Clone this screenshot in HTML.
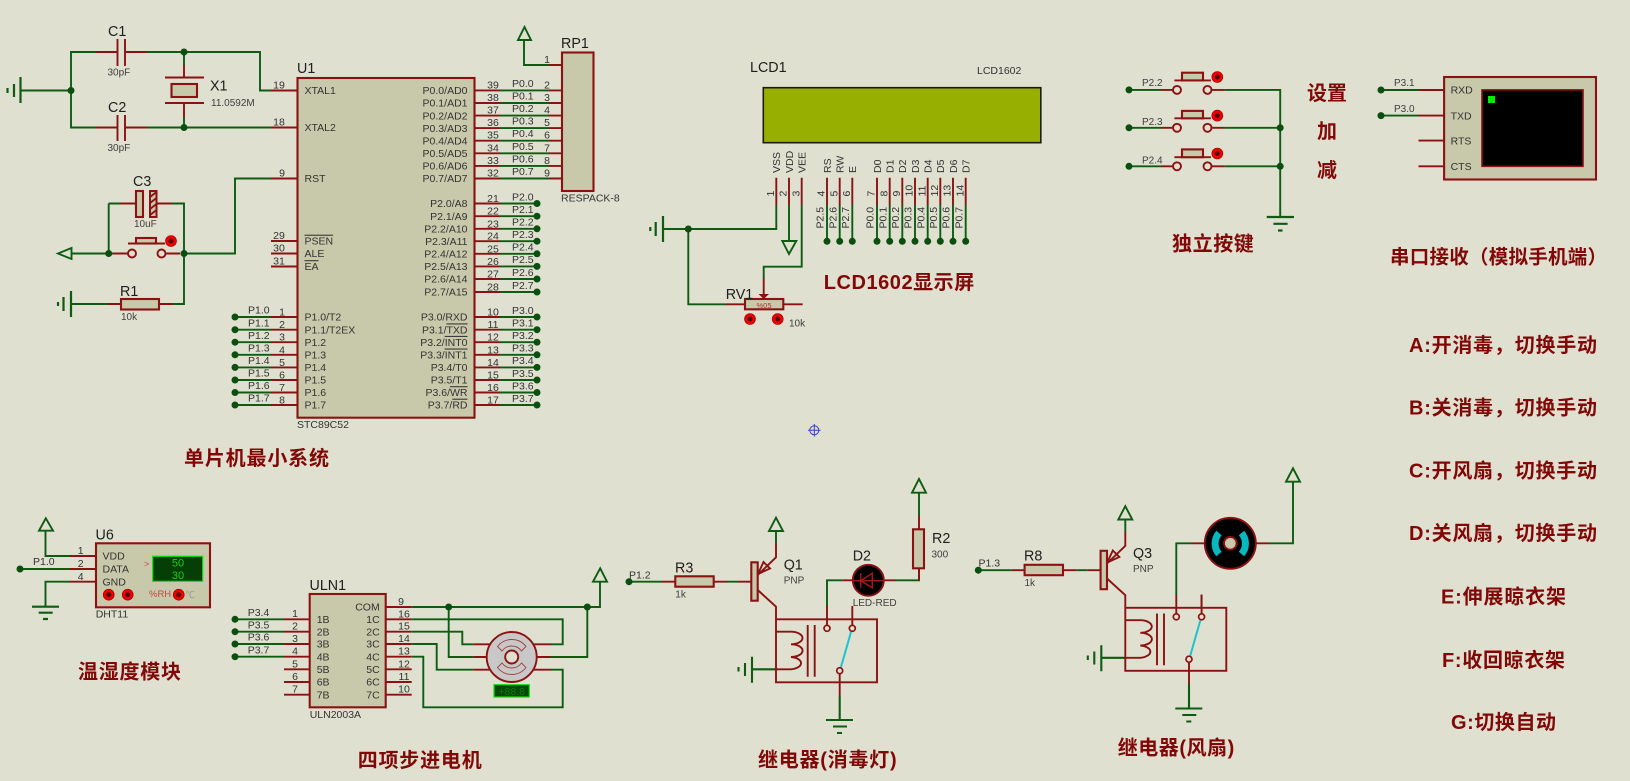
<!DOCTYPE html>
<html lang="zh">
<head>
<meta charset="utf-8">
<title>Proteus schematic</title>
<style>
html,body{margin:0;padding:0;background:#dfe0cf;width:1630px;height:781px;overflow:hidden}
svg{display:block;filter:blur(.35px)}
text{font-family:"Liberation Sans","Noto Sans CJK SC",sans-serif;fill:#333;font-size:10.5px}
.l{font-size:14.3px;fill:#1e1e1e}
.s{font-size:10px;fill:#404040}
.e{text-anchor:end}
.c{text-anchor:middle}
.t{font-size:20px;font-weight:700;fill:#820808}
.g{fill:none;stroke:#0d5c12;stroke-width:1.9}
.r{fill:none;stroke:#8b1212;stroke-width:1.9}
.b{fill:#c8c8aa;stroke:#8b1212;stroke-width:2.1}
.d{fill:#0b4f10}
.k{fill:#f00000;stroke:#a00000;stroke-width:.6}
.kk{fill:#500;}
</style>
</head>
<body>
<svg width="1630" height="781" viewBox="0 0 1630 781" xmlns="http://www.w3.org/2000/svg">
<rect width="1630" height="781" fill="#dfe0cf"/>

<!-- ===== MCU section wires ===== -->
<g class="g">
<path d="M96 52H71V127.5H96M21 90.5H71M147 52H260V90.5H271M184 52V65M147 127.5H271M184 117V127.5"/>
<path d="M271 178.5H235V253.5H184M108.7 203.5V253.5M108.7 203.5H120M172 203.5H184V304H173M71.5 253.5H113M108 304H71"/>
<path d="M20.5 77V103M14 84V97M7.5 88V93" stroke-width="2.2"/>
<path d="M71 291V317M63.5 297V311M58 302V306" stroke-width="2.2"/>
<path d="M71.5 248L58 253.5L71.5 259Z"/>
</g>
<g class="r">
<path d="M96 52H117.5M125 52H147M117.5 39V66M125 39V66" />
<path d="M96 127.5H117.5M125 127.5H147M117.5 115V141M125 115V141" />
<path d="M184 65V78M165 77.5H204M165 103H204M184 103V117" />
<path d="M271 90.5H298M271 127.5H298M271 178.5H298M271 241H298M271 253.5H298M271 266.5H298"/>
<path d="M120 203.5H136M156.5 203.5H172M113 253.5H128M165.5 253.5H180M128 243.5H165"/>
<path d="M108 304H121M159 304H173"/>
<path d="M298 86.5L302 90.5L298 94.5" stroke-width="1.3"/>
</g>
<rect class="b" x="171.5" y="84" width="25.5" height="13"/>
<rect class="b" x="136" y="191" width="7" height="26"/>
<rect x="150" y="191" width="6.5" height="26" fill="#c8c8aa" stroke="#8b1212" stroke-width="2"/>
<path d="M150 197l6.5-5M150 203l6.5-5M150 209l6.5-5M150 215l6.5-5" stroke="#8b1212" stroke-width="1.8" fill="none"/>
<rect class="b" x="136" y="238" width="20" height="5.5"/>
<circle cx="132" cy="253.5" r="4" fill="#dfe0cf" stroke="#8b1212" stroke-width="1.9"/>
<circle cx="161.5" cy="253.5" r="4" fill="#dfe0cf" stroke="#8b1212" stroke-width="1.9"/>
<circle class="k" cx="171" cy="241" r="5.5"/><circle class="kk" cx="171" cy="241" r="2.5"/>
<rect class="b" x="121" y="299" width="38" height="10.5"/>
<g class="d"><circle cx="71" cy="90.5" r="3.5"/><circle cx="184" cy="52" r="3.5"/><circle cx="184" cy="127.5" r="3.5"/><circle cx="108.7" cy="253.5" r="3.5"/><circle cx="184" cy="253.5" r="3.5"/></g>

<!-- U1 -->
<rect class="b" x="297.5" y="78" width="177" height="339.7"/>
<text class="l" x="297" y="73">U1</text>
<text class="l" x="108" y="36">C1</text>
<text class="s" x="107.5" y="75.5">30pF</text>
<text class="l" x="108" y="112">C2</text>
<text class="s" x="107.5" y="151">30pF</text>
<text class="l" x="210" y="90.5">X1</text>
<text class="s" x="211" y="106">11.0592M</text>
<text class="l" x="133" y="186">C3</text>
<text class="s" x="134" y="227">10uF</text>
<text class="l" x="120" y="296">R1</text>
<text class="s" x="121" y="320">10k</text>
<text x="297" y="428">STC89C52</text>
<text class="t" x="184" y="465" textLength="145">单片机最小系统</text>

<text class="c" x="279" y="88.5">19</text><text x="304.5" y="94.2">XTAL1</text>
<text class="c" x="279" y="125.5">18</text><text x="304.5" y="131.2">XTAL2</text>
<text class="c" x="282" y="176.5">9</text><text x="304.5" y="182.2">RST</text>
<text class="c" x="279" y="239">29</text><text x="304.5" y="244.7" text-decoration="overline">PSEN</text>
<text class="c" x="279" y="251.5">30</text><text x="304.5" y="257.2">ALE</text>
<text class="c" x="279" y="264.5">31</text><text x="304.5" y="270.2" text-decoration="overline">EA</text>

<!-- P1 pins -->
<g class="g"><path d="M235 317H271M235 329.7H271M235 342.2H271M235 354.8H271M235 367.4H271M235 380H271M235 392.5H271M235 405H271"/></g>
<g class="r"><path d="M271 317H298M271 329.7H298M271 342.2H298M271 354.8H298M271 367.4H298M271 380H298M271 392.5H298M271 405H298"/></g>
<g class="d"><circle cx="235" cy="317" r="3.5"/><circle cx="235" cy="329.7" r="3.5"/><circle cx="235" cy="342.2" r="3.5"/><circle cx="235" cy="354.8" r="3.5"/><circle cx="235" cy="367.4" r="3.5"/><circle cx="235" cy="380" r="3.5"/><circle cx="235" cy="392.5" r="3.5"/><circle cx="235" cy="405" r="3.5"/></g>
<text x="248" y="313.7">P1.0</text><text x="248" y="326.4">P1.1</text><text x="248" y="338.9">P1.2</text><text x="248" y="351.5">P1.3</text><text x="248" y="364.1">P1.4</text><text x="248" y="376.7">P1.5</text><text x="248" y="389.2">P1.6</text><text x="248" y="401.7">P1.7</text>
<text class="c" x="282" y="315.5">1</text><text class="c" x="282" y="328.2">2</text><text class="c" x="282" y="340.7">3</text><text class="c" x="282" y="353.3">4</text><text class="c" x="282" y="365.9">5</text><text class="c" x="282" y="378.5">6</text><text class="c" x="282" y="391">7</text><text class="c" x="282" y="403.5">8</text>
<text x="304.5" y="320.7">P1.0/T2</text><text x="304.5" y="333.4">P1.1/T2EX</text><text x="304.5" y="345.9">P1.2</text><text x="304.5" y="358.5">P1.3</text><text x="304.5" y="371.1">P1.4</text><text x="304.5" y="383.7">P1.5</text><text x="304.5" y="396.2">P1.6</text><text x="304.5" y="408.7">P1.7</text>

<!-- P0 pins + RP1 -->
<g class="g"><path d="M500 90.4H549M500 103H549M500 115.6H549M500 128.1H549M500 140.7H549M500 153.3H549M500 165.9H549M500 178.5H549M549 65H524V40M518 40H531L524.5 27Z"/></g>
<g class="r"><path d="M474.5 90.4H500M474.5 103H500M474.5 115.6H500M474.5 128.1H500M474.5 140.7H500M474.5 153.3H500M474.5 165.9H500M474.5 178.5H500M549 90.4H562M549 103H562M549 115.6H562M549 128.1H562M549 140.7H562M549 153.3H562M549 165.9H562M549 178.5H562M549 65H562"/></g>
<rect class="b" x="562" y="52.5" width="31.5" height="138.5"/>
<text class="l" x="561" y="48">RP1</text>
<text x="561" y="201.5">RESPACK-8</text>
<text class="c" x="547" y="63">1</text>
<g class="c"><text class="c" x="547" y="88.4">2</text><text class="c" x="547" y="101">3</text><text class="c" x="547" y="113.6">4</text><text class="c" x="547" y="126.1">5</text><text class="c" x="547" y="138.7">6</text><text class="c" x="547" y="151.3">7</text><text class="c" x="547" y="163.9">8</text><text class="c" x="547" y="176.5">9</text></g>
<text class="c" x="493" y="88.4">39</text><text class="c" x="493" y="101">38</text><text class="c" x="493" y="113.6">37</text><text class="c" x="493" y="126.1">36</text><text class="c" x="493" y="138.7">35</text><text class="c" x="493" y="151.3">34</text><text class="c" x="493" y="163.9">33</text><text class="c" x="493" y="176.5">32</text>
<text x="512" y="86.9">P0.0</text><text x="512" y="99.5">P0.1</text><text x="512" y="112.1">P0.2</text><text x="512" y="124.6">P0.3</text><text x="512" y="137.2">P0.4</text><text x="512" y="149.8">P0.5</text><text x="512" y="162.4">P0.6</text><text x="512" y="175">P0.7</text>
<text class="e" x="467.5" y="94.1">P0.0/AD0</text><text class="e" x="467.5" y="106.7">P0.1/AD1</text><text class="e" x="467.5" y="119.3">P0.2/AD2</text><text class="e" x="467.5" y="131.8">P0.3/AD3</text><text class="e" x="467.5" y="144.4">P0.4/AD4</text><text class="e" x="467.5" y="157">P0.5/AD5</text><text class="e" x="467.5" y="169.6">P0.6/AD6</text><text class="e" x="467.5" y="182.2">P0.7/AD7</text>

<!-- P2 pins -->
<g class="g"><path d="M500 203.5H537M500 216.2H537M500 228.8H537M500 241.2H537M500 253.8H537M500 266.4H537M500 279H537M500 292H537"/></g>
<g class="r"><path d="M474.5 203.5H500M474.5 216.2H500M474.5 228.8H500M474.5 241.2H500M474.5 253.8H500M474.5 266.4H500M474.5 279H500M474.5 292H500"/></g>
<g class="d"><circle cx="537" cy="203.5" r="3.5"/><circle cx="537" cy="216.2" r="3.5"/><circle cx="537" cy="228.8" r="3.5"/><circle cx="537" cy="241.2" r="3.5"/><circle cx="537" cy="253.8" r="3.5"/><circle cx="537" cy="266.4" r="3.5"/><circle cx="537" cy="279" r="3.5"/><circle cx="537" cy="292" r="3.5"/></g>
<text class="c" x="493" y="202">21</text><text class="c" x="493" y="214.7">22</text><text class="c" x="493" y="227.3">23</text><text class="c" x="493" y="239.7">24</text><text class="c" x="493" y="252.3">25</text><text class="c" x="493" y="264.9">26</text><text class="c" x="493" y="277.5">27</text><text class="c" x="493" y="290.5">28</text>
<text x="512" y="200.3">P2.0</text><text x="512" y="213">P2.1</text><text x="512" y="225.6">P2.2</text><text x="512" y="238">P2.3</text><text x="512" y="250.6">P2.4</text><text x="512" y="263.2">P2.5</text><text x="512" y="275.8">P2.6</text><text x="512" y="288.8">P2.7</text>
<text class="e" x="467.5" y="207.2">P2.0/A8</text><text class="e" x="467.5" y="219.9">P2.1/A9</text><text class="e" x="467.5" y="232.5">P2.2/A10</text><text class="e" x="467.5" y="244.9">P2.3/A11</text><text class="e" x="467.5" y="257.5">P2.4/A12</text><text class="e" x="467.5" y="270.1">P2.5/A13</text><text class="e" x="467.5" y="282.7">P2.6/A14</text><text class="e" x="467.5" y="295.7">P2.7/A15</text>

<!-- P3 pins -->
<g class="g"><path d="M500 317H537M500 329.7H537M500 342.2H537M500 354.8H537M500 367.4H537M500 380H537M500 392.5H537M500 405H537"/></g>
<g class="r"><path d="M474.5 317H500M474.5 329.7H500M474.5 342.2H500M474.5 354.8H500M474.5 367.4H500M474.5 380H500M474.5 392.5H500M474.5 405H500"/></g>
<g class="d"><circle cx="537" cy="317" r="3.5"/><circle cx="537" cy="329.7" r="3.5"/><circle cx="537" cy="342.2" r="3.5"/><circle cx="537" cy="354.8" r="3.5"/><circle cx="537" cy="367.4" r="3.5"/><circle cx="537" cy="380" r="3.5"/><circle cx="537" cy="392.5" r="3.5"/><circle cx="537" cy="405" r="3.5"/></g>
<text class="c" x="493" y="315.5">10</text><text class="c" x="493" y="328.2">11</text><text class="c" x="493" y="340.7">12</text><text class="c" x="493" y="353.3">13</text><text class="c" x="493" y="365.9">14</text><text class="c" x="493" y="378.5">15</text><text class="c" x="493" y="391">16</text><text class="c" x="493" y="403.5">17</text>
<text x="512" y="313.8">P3.0</text><text x="512" y="326.5">P3.1</text><text x="512" y="339">P3.2</text><text x="512" y="351.6">P3.3</text><text x="512" y="364.2">P3.4</text><text x="512" y="376.8">P3.5</text><text x="512" y="389.3">P3.6</text><text x="512" y="401.8">P3.7</text>
<text class="e" x="467.5" y="320.7">P3.0/RXD</text>
<text class="e" x="467.5" y="333.4">P3.1/<tspan text-decoration="overline">TXD</tspan></text>
<text class="e" x="467.5" y="345.9">P3.2/<tspan text-decoration="overline">INT0</tspan></text>
<text class="e" x="467.5" y="358.5">P3.3/<tspan text-decoration="overline">INT1</tspan></text>
<text class="e" x="467.5" y="371.1">P3.4/T0</text>
<text class="e" x="467.5" y="383.7">P3.5/T1</text>
<text class="e" x="467.5" y="396.2">P3.6/<tspan text-decoration="overline">WR</tspan></text>
<text class="e" x="467.5" y="408.7">P3.7/<tspan text-decoration="overline">RD</tspan></text>

<!-- ===== LCD ===== -->
<text class="l" x="750" y="72">LCD1</text>
<text x="977" y="74">LCD1602</text>
<rect x="763.3" y="87.7" width="277.5" height="55" fill="#97b000" stroke="#1a1a10" stroke-width="1.6"/>
<g class="r"><path d="M776.3 177.7V205M789 177.7V205M801.7 177.7V205M827 177.7V205M839.7 177.7V205M852.3 177.7V205M877 177.7V205M889.7 177.7V205M902.3 177.7V205M915 177.7V205M927.7 177.7V205M940.3 177.7V205M953 177.7V205M965.7 177.7V205"/></g>
<g class="g"><path d="M827 205V241M839.7 205V241M852.3 205V241M877 205V241M889.7 205V241M902.3 205V241M915 205V241M927.7 205V241M940.3 205V241M953 205V241M965.7 205V241"/>
<path d="M776.3 205V229H663M688.3 229V304.3H726M789 205V241M782.3 241H796.3L789 254ZM801.7 205V266.7H763.7V278"/>
<path d="M663 216V242M655.7 222V236M650.3 227V231" stroke-width="2.2"/></g>
<g class="d"><circle cx="688.3" cy="229" r="3.5"/><circle cx="827" cy="241.3" r="3.5"/><circle cx="839.7" cy="241.3" r="3.5"/><circle cx="852.3" cy="241.3" r="3.5"/><circle cx="877" cy="241.3" r="3.5"/><circle cx="889.7" cy="241.3" r="3.5"/><circle cx="902.3" cy="241.3" r="3.5"/><circle cx="915" cy="241.3" r="3.5"/><circle cx="927.7" cy="241.3" r="3.5"/><circle cx="940.3" cy="241.3" r="3.5"/><circle cx="953" cy="241.3" r="3.5"/><circle cx="965.7" cy="241.3" r="3.5"/></g>
<g>
<text transform="translate(780 173) rotate(-90)">VSS</text>
<text transform="translate(793 173) rotate(-90)">VDD</text>
<text transform="translate(805.5 173) rotate(-90)">VEE</text>
<text transform="translate(831 173) rotate(-90)">RS</text>
<text transform="translate(843.5 173) rotate(-90)">RW</text>
<text transform="translate(856 173) rotate(-90)">E</text>
<text transform="translate(881 173) rotate(-90)">D0</text>
<text transform="translate(893.5 173) rotate(-90)">D1</text>
<text transform="translate(906 173) rotate(-90)">D2</text>
<text transform="translate(919 173) rotate(-90)">D3</text>
<text transform="translate(931.5 173) rotate(-90)">D4</text>
<text transform="translate(944 173) rotate(-90)">D5</text>
<text transform="translate(957 173) rotate(-90)">D6</text>
<text transform="translate(969.5 173) rotate(-90)">D7</text>
<text transform="translate(774 196.5) rotate(-90)">1</text>
<text transform="translate(786.5 196.5) rotate(-90)">2</text>
<text transform="translate(799.5 196.5) rotate(-90)">3</text>
<text transform="translate(824.5 196.5) rotate(-90)">4</text>
<text transform="translate(837.5 196.5) rotate(-90)">5</text>
<text transform="translate(850 196.5) rotate(-90)">6</text>
<text transform="translate(874.5 196.5) rotate(-90)">7</text>
<text transform="translate(887.5 196.5) rotate(-90)">8</text>
<text transform="translate(900 196.5) rotate(-90)">9</text>
<text transform="translate(912.5 196.5) rotate(-90)">10</text>
<text transform="translate(925.5 196.5) rotate(-90)">11</text>
<text transform="translate(938 196.5) rotate(-90)">12</text>
<text transform="translate(950.5 196.5) rotate(-90)">13</text>
<text transform="translate(963.5 196.5) rotate(-90)">14</text>
<text transform="translate(823.7 228.5) rotate(-90)">P2.5</text>
<text transform="translate(836.5 228.5) rotate(-90)">P2.6</text>
<text transform="translate(849 228.5) rotate(-90)">P2.7</text>
<text transform="translate(873.5 228.5) rotate(-90)">P0.0</text>
<text transform="translate(886.5 228.5) rotate(-90)">P0.1</text>
<text transform="translate(899 228.5) rotate(-90)">P0.2</text>
<text transform="translate(911.5 228.5) rotate(-90)">P0.3</text>
<text transform="translate(924.5 228.5) rotate(-90)">P0.4</text>
<text transform="translate(937 228.5) rotate(-90)">P0.5</text>
<text transform="translate(949.5 228.5) rotate(-90)">P0.6</text>
<text transform="translate(962.5 228.5) rotate(-90)">P0.7</text>
</g>
<g class="r"><path d="M726 304.3H745M783 304.3H802.7M763.7 278V299"/></g>
<path d="M758.5 294H769L763.7 299Z" fill="#8b1212"/>
<rect class="b" x="745" y="299" width="38.3" height="10.3"/>
<text x="764" y="308" class="c" style="font-size:7.5px;fill:#c03030">%05</text>
<text class="l" x="725.7" y="299">RV1</text>
<circle class="k" cx="750" cy="319" r="5.5"/><circle class="kk" cx="750" cy="319" r="2.5"/>
<circle class="k" cx="777.7" cy="319" r="5.5"/><circle class="kk" cx="777.7" cy="319" r="2.5"/>
<text class="s" x="789" y="326.7">10k</text>
<text class="t" x="823.7" y="289" textLength="150.5">LCD1602显示屏</text>

<!-- crosshair -->
<g fill="none" stroke="#3a3ad8" stroke-width="1"><circle cx="814.3" cy="430.3" r="4.5"/><path d="M814.3 424V436.6M808 430.3H820.6"/></g>

<!-- ===== Buttons + terminal (shifted up 1px) ===== -->
<g transform="translate(0 -1)">
<g class="g">
<path d="M1129 90.9H1161M1129 128.8H1161M1129 167.3H1161M1224.4 90.9H1280.2V218M1224.4 128.8H1280.2M1224.4 167.3H1280.2"/>
<path d="M1266.7 218H1294M1273.4 224.8H1287.6M1278 231.5H1282.5" stroke-width="2.2"/>
</g>
<g class="r"><path d="M1161 90.9H1173M1211 90.9H1224.4M1161 128.8H1173M1211 128.8H1224.4M1161 167.3H1173M1211 167.3H1224.4M1174.4 81.4H1210.9M1174.4 119.3H1210.9M1174.4 158.2H1210.9"/></g>
<g fill="#dfe0cf" stroke="#8b1212" stroke-width="1.9">
<circle cx="1177" cy="90.9" r="4"/><circle cx="1207.5" cy="90.9" r="4"/><circle cx="1177" cy="128.8" r="4"/><circle cx="1207.5" cy="128.8" r="4"/><circle cx="1177" cy="167.3" r="4"/><circle cx="1207.5" cy="167.3" r="4"/></g>
<rect class="b" x="1182" y="73.7" width="21" height="7.7"/><rect class="b" x="1182" y="111.9" width="21" height="7.4"/><rect class="b" x="1182" y="150.4" width="21" height="7.8"/>
<circle class="k" cx="1217.3" cy="78" r="5.5"/><circle class="kk" cx="1217.3" cy="78" r="2.5"/>
<circle class="k" cx="1217.3" cy="116.6" r="5.5"/><circle class="kk" cx="1217.3" cy="116.6" r="2.5"/>
<circle class="k" cx="1217.3" cy="154.5" r="5.5"/><circle class="kk" cx="1217.3" cy="154.5" r="2.5"/>
<g class="d"><circle cx="1129" cy="90.9" r="3.5"/><circle cx="1129" cy="128.8" r="3.5"/><circle cx="1129" cy="167.3" r="3.5"/><circle cx="1280.2" cy="128.8" r="3.5"/><circle cx="1280.2" cy="167.3" r="3.5"/></g>
<text class="s" x="1142" y="87.2">P2.2</text><text class="s" x="1142" y="126">P2.3</text><text class="s" x="1142" y="164.3">P2.4</text>
<g class="g"><path d="M1381 91H1418.5M1381 116.6H1418.5"/></g>
<g class="r"><path d="M1418.5 91H1444M1418.5 116.6H1444M1418.5 141.6H1444M1418.5 167.3H1444"/></g>
<rect class="b" x="1444.1" y="78" width="151.9" height="102.5"/>
<rect x="1482" y="90.9" width="101" height="76.4" fill="#000" stroke="#8b1212" stroke-width="1.6"/>
<rect x="1488" y="97" width="7" height="7" fill="#00f000"/>
<g class="d"><circle cx="1381" cy="91" r="3.5"/><circle cx="1381" cy="116.6" r="3.5"/></g>
<text class="s" x="1394" y="87">P3.1</text><text class="s" x="1394" y="113">P3.0</text>
<text x="1450.6" y="94.7">RXD</text><text x="1450.6" y="120.3">TXD</text><text x="1450.6" y="145.3">RTS</text><text x="1450.6" y="171">CTS</text>
</g>
<text class="t" x="1307" y="100" textLength="40">设置</text>
<text class="t" x="1317" y="138">加</text>
<text class="t" x="1317" y="177">减</text>
<text class="t" x="1172" y="250.3" textLength="81.8">独立按键</text>
<text class="t" x="1390" y="263.5" textLength="217" style="font-size:19.5px">串口接收（模拟手机端）</text>

<!-- right text -->
<text class="t" x="1409" y="352" textLength="188">A:开消毒，切换手动</text>
<text class="t" x="1409" y="414.7" textLength="188">B:关消毒，切换手动</text>
<text class="t" x="1409" y="477.7" textLength="188">C:开风扇，切换手动</text>
<text class="t" x="1409" y="540" textLength="188">D:关风扇，切换手动</text>
<text class="t" x="1441" y="603.7" textLength="125">E:伸展晾衣架</text>
<text class="t" x="1442" y="667" textLength="123">F:收回晾衣架</text>
<text class="t" x="1451" y="729" textLength="105">G:切换自动</text>

<!-- ===== DHT11 ===== -->
<g class="g">
<path d="M70 556H45.5V530.7M39 530.7H53L45.8 518.3ZM20 569H70M70 581.7H45.5V606.7"/>
<path d="M32 606.7H59M38.7 612.7H52.7M43 619H48" stroke-width="2.2"/>
</g>
<g class="r"><path d="M70 556H96M70 569H96M70 581.7H96"/></g>
<rect class="b" x="96" y="543.3" width="114" height="64"/>
<circle class="d" cx="20" cy="569" r="3.5"/>
<text class="l" x="95.5" y="539.3">U6</text>
<text x="33" y="565">P1.0</text>
<text x="95.7" y="617.3">DHT11</text>
<text class="c" x="80.7" y="554">1</text><text class="c" x="80.7" y="567">2</text><text class="c" x="80.7" y="580">4</text>
<text x="102.5" y="559.3">VDD</text><text x="102.5" y="572.7">DATA</text><text x="102.5" y="585.7">GND</text>
<rect x="152.7" y="556.3" width="50" height="25" fill="#053f05" stroke="#10e010" stroke-width="1.2"/>
<text class="c" x="178" y="566.5" style="fill:#1fcf1f;font-size:11px">50</text>
<text class="c" x="178" y="579" style="fill:#1fcf1f;font-size:11px">30</text>
<text x="144" y="567" style="fill:#c85050;font-size:9px">&gt;</text>
<text x="149" y="597" style="fill:#c04848;font-size:9.5px">%RH</text>
<circle class="k" cx="108.7" cy="594.7" r="5.5"/><circle class="kk" cx="108.7" cy="594.7" r="2.5"/>
<circle class="k" cx="127.7" cy="594.7" r="5.5"/><circle class="kk" cx="127.7" cy="594.7" r="2.5"/>
<circle class="k" cx="178.7" cy="594.7" r="5.5"/><circle class="kk" cx="178.7" cy="594.7" r="2.5"/>
<text x="185.5" y="598" style="fill:#999;font-size:9.5px">℃</text>
<text class="t" x="78" y="678.7" textLength="103">温湿度模块</text>

<!-- ===== ULN2003 ===== -->
<g class="g">
<path d="M235 619.3H284M235 631.7H284M235 644H284M235 656.7H284"/>
<path d="M411.7 607H600V581.7M593 581.7H607L600.2 568.3Z"/>
<path d="M411.7 619.3H562.7V644.3H551M411.7 631.7H462.3V644.3H473.3M448.7 607V657H473.3M411.7 644H436.7V669.7H473.3"/>
<path d="M411.7 656.7H423.3V707.3H562.7V669.7H551M551 657H587.3V607"/>
</g>
<g class="r"><path d="M284 619.3H310M284 631.7H310M284 644H310M284 656.7H310M284 669.3H310M284 682H310M284 694.7H310"/>
<path d="M385.7 607H411.7M385.7 619.3H411.7M385.7 631.7H411.7M385.7 644H411.7M385.7 656.7H411.7M385.7 669.3H411.7M385.7 682H411.7M385.7 694.7H411.7"/>
<path d="M473.3 644.3H490M473.3 657H487M473.3 669.7H490M533 644.3H551M536.7 657H551M533 669.7H551"/></g>
<rect class="b" x="309.7" y="594" width="76" height="113.3"/>
<g class="d"><circle cx="235" cy="619.3" r="3.5"/><circle cx="235" cy="631.7" r="3.5"/><circle cx="235" cy="644" r="3.5"/><circle cx="235" cy="656.7" r="3.5"/><circle cx="448.7" cy="607" r="3.5"/><circle cx="587.3" cy="607" r="3.5"/></g>
<text class="l" x="309.5" y="590">ULN1</text>
<text x="309.7" y="718">ULN2003A</text>
<text x="247.7" y="616">P3.4</text><text x="247.7" y="628.4">P3.5</text><text x="247.7" y="640.7">P3.6</text><text x="247.7" y="653.4">P3.7</text>
<text class="c" x="295" y="617">1</text><text class="c" x="295" y="629.5">2</text><text class="c" x="295" y="642">3</text><text class="c" x="295" y="654.7">4</text><text class="c" x="295" y="667.3">5</text><text class="c" x="295" y="680">6</text><text class="c" x="295" y="692.7">7</text>
<text x="316.7" y="623">1B</text><text x="316.7" y="635.4">2B</text><text x="316.7" y="647.7">3B</text><text x="316.7" y="660.4">4B</text><text x="316.7" y="673">5B</text><text x="316.7" y="685.7">6B</text><text x="316.7" y="698.4">7B</text>
<text class="e" x="379.7" y="610.7">COM</text><text class="e" x="379.7" y="623">1C</text><text class="e" x="379.7" y="635.4">2C</text><text class="e" x="379.7" y="647.7">3C</text><text class="e" x="379.7" y="660.4">4C</text><text class="e" x="379.7" y="673">5C</text><text class="e" x="379.7" y="685.7">6C</text><text class="e" x="379.7" y="698.4">7C</text>
<text class="c" x="401" y="605">9</text><text class="c" x="404" y="617.3">16</text><text class="c" x="404" y="629.7">15</text><text class="c" x="404" y="642">14</text><text class="c" x="404" y="654.7">13</text><text class="c" x="404" y="667.3">12</text><text class="c" x="404" y="680">11</text><text class="c" x="404" y="692.7">10</text>
<!-- stepper -->
<circle cx="511.7" cy="657" r="25" fill="#c8c8c8" stroke="#8b1212" stroke-width="1.9"/>
<circle cx="511.7" cy="657" r="6.5" fill="#dfe0cf" stroke="#8b1212" stroke-width="1.9"/>
<g fill="none" stroke="#a04040" stroke-width=".9">
<path d="M497.5 646.5A18 18 0 0 1 526 646.5L521.5 651A12 12 0 0 0 502 651Z"/>
<path d="M497.5 667.5A18 18 0 0 0 526 667.5L521.5 663A12 12 0 0 1 502 663Z"/>
</g>
<rect x="494" y="684.7" width="35.3" height="12.3" fill="#064806" stroke="#10e010" stroke-width="1.2"/>
<text class="c" x="511.7" y="695" style="fill:#0c7a10;font-size:10.5px">+88.8</text>
<text class="t" x="357.7" y="767" textLength="124">四项步进电机</text>

<!-- ===== Relay stage (shared shapes, no text) ===== -->
<defs>
<g id="stage">
<g class="g">
<path d="M629 581.7H662M727 581.7H738M776 543V531M769 531H783L776 517.7Z"/>
<path d="M752 669.3H776M752 656.7V682.7M745 663V676M738.5 667V671.5" stroke-width="2.1"/>
<path d="M839.7 696V720M826 720H853M833 726.5H847M837 733H842" stroke-width="2.1"/>
</g>
<g class="r">
<path d="M662 581.7H675.3M713.7 581.7H727M738 581.7H751.3"/>
<path d="M757.7 575L776 557.3V543M757.7 590L776 606.7V619.3"/>
<path d="M758 574L770 568.5L763.5 562Z" fill="none"/>
<path d="M776 631.7H791A11.5 6.3 0 0 1 791 644.3A11.5 6.3 0 0 1 791 657A11.5 6.2 0 0 1 791 669.3H776"/>
<path d="M807.7 625V676.7M814.7 625V676.7"/>
<path d="M827 606V625M852.3 606V625M839.7 673.7V696"/>
<rect x="776" y="619.3" width="101" height="63"/>
</g>
<path d="M851 632L841 667" stroke="#1cc4cf" stroke-width="2" fill="none"/>
<g fill="#dfe0cf" stroke="#8b1212" stroke-width="1.7"><circle cx="827" cy="628.3" r="3"/><circle cx="852.3" cy="628.3" r="3"/><circle cx="839.7" cy="670.7" r="3"/></g>
<rect class="b" x="675.3" y="576.3" width="38.4" height="10.4"/>
<rect class="b" x="751.3" y="562.3" width="6.4" height="38.4"/>
<circle class="d" cx="629" cy="581.7" r="3.5"/>
</g>
</defs>
<use href="#stage"/>
<use href="#stage" transform="translate(349.3 -11.5)"/>

<!-- Q1 part -->
<g class="g"><path d="M827 606V580.3H842.3M895 580.3H919V568M919 516V492.7M912 492.7H926L919 479Z"/></g>
<g class="r"><path d="M842.3 580.3H853M884 580.3H895M919 568V580.3M919 516V529.3"/></g>
<circle cx="868.3" cy="580.3" r="15.5" fill="#000" stroke="#8b1212" stroke-width="1.9"/>
<path d="M853 580.7H884M860.7 573.3V587.8M860.7 580.7L872.3 573.3V587.8Z" fill="none" stroke="#a01818" stroke-width="1.5"/>
<rect class="b" x="913" y="529.3" width="11" height="39"/>
<text class="l" x="675" y="572.3">R3</text><text class="s" x="675.3" y="597.3">1k</text>
<text class="l" x="783.7" y="569.3">Q1</text><text class="s" x="783.7" y="583.3">PNP</text>
<text x="629" y="578.3">P1.2</text>
<text class="l" x="852.7" y="560.7">D2</text><text class="s" x="852.7" y="606">LED-RED</text>
<text class="l" x="932" y="543">R2</text><text class="s" x="931.5" y="557.3">300</text>
<text class="t" x="758" y="766.3" textLength="138.7">继电器(消毒灯)</text>

<!-- Q3 part -->
<g class="g"><path d="M1176.3 595V543.3H1191M1269 543.3H1293V481.7M1286 481.7H1300L1293 468.3Z"/></g>
<g class="r"><path d="M1191 543.3H1205M1256 543.3H1269M1201.5 595V607"/></g>
<circle cx="1230.3" cy="543.3" r="25.5" fill="#000" stroke="#8b1212" stroke-width="1.9"/>
<path d="M1219 533A16 16 0 0 0 1219 554M1241.5 533A16 16 0 0 1 1241.5 554" fill="none" stroke="#08b8c0" stroke-width="7"/>
<circle cx="1230.3" cy="543.3" r="6.3" fill="#c8c8aa" stroke="#8b1212" stroke-width="1.9"/>
<text class="l" x="1024" y="560.7">R8</text><text class="s" x="1024.5" y="586">1k</text>
<text class="l" x="1133" y="558">Q3</text><text class="s" x="1133" y="572">PNP</text>
<text x="978.5" y="566.5">P1.3</text>
<text class="t" x="1117.7" y="754.3" textLength="116.6">继电器(风扇)</text>
</svg>
</body>
</html>
